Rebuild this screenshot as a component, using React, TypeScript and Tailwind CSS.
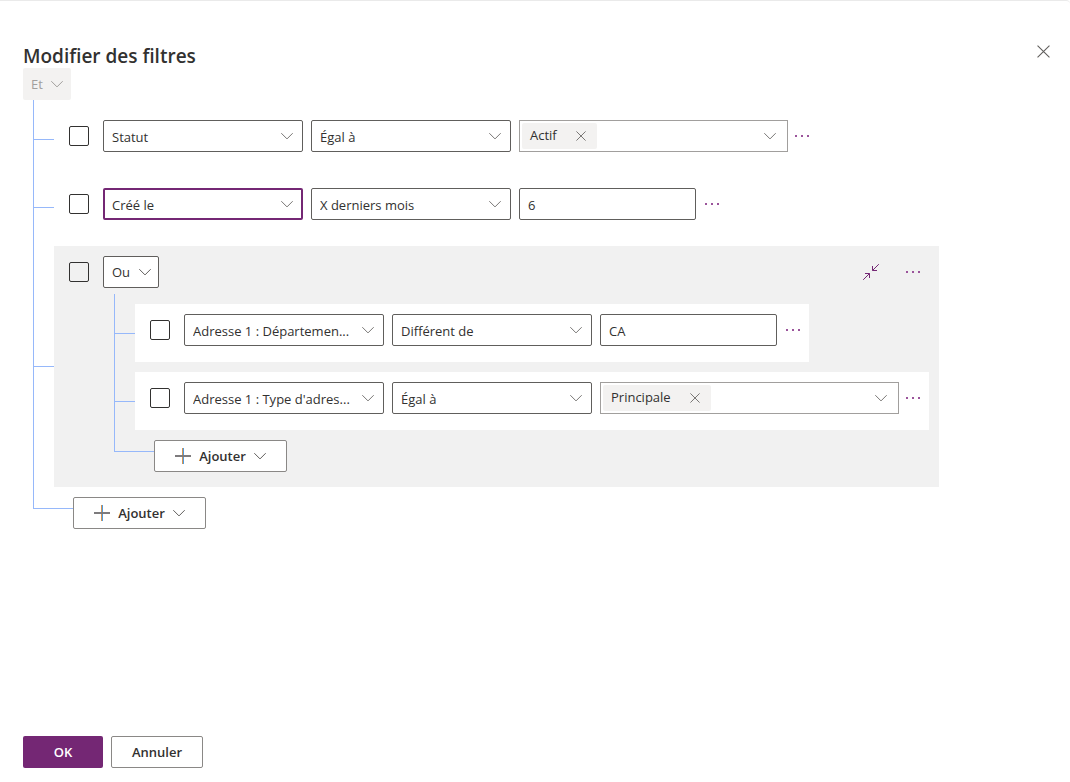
import { useState } from 'react';
import type { ReactNode } from 'react';

type Condition = {
  id: number;
  field: string;
  operator: string;
  value: string;
  kind: 'text' | 'tags';
  focused?: boolean;
  width?: string;
};

const rootConditions: Condition[] = [
  { id: 1, field: 'Statut', operator: 'Égal à', value: 'Actif', kind: 'tags', width: 'w-[269px]' },
  { id: 2, field: 'Créé le', operator: 'X derniers mois', value: '6', kind: 'text', focused: true },
];

const groupConditions: Condition[] = [
  { id: 3, field: 'Adresse 1 : Départemen...', operator: 'Différent de', value: 'CA', kind: 'text' },
  { id: 4, field: "Adresse 1 : Type d'adres...", operator: 'Égal à', value: 'Principale', kind: 'tags', width: 'w-[299px]' },
];

const Chevron = ({ className = '' }: { className?: string }) => (
  <svg className={`h-2 w-3 shrink-0 ${className}`} viewBox="0 0 12 8" fill="none" stroke="currentColor" strokeWidth="1">
    <path d="M0.3 1.2 6 6.9l5.7-5.7" />
  </svg>
);

const Cross = ({ className = '' }: { className?: string }) => (
  <svg className={className} viewBox="0 0 12 12" fill="none" stroke="currentColor" strokeWidth="1">
    <path d="M0.5 0.5l11 11M11.5 0.5l-11 11" />
  </svg>
);

const Checkbox = ({ label, className = 'bg-white' }: { label: string; className?: string }) => (
  <input
    type="checkbox"
    aria-label={label}
    className={`mr-3.5 size-5 shrink-0 appearance-none rounded-xs border border-[#323130] checked:bg-[#742774] ${className}`}
  />
);

const Dropdown = ({ label, value, focused }: { label: string; value: string; focused?: boolean }) => (
  <div className="relative mr-2 w-[200px] shrink-0">
    <select
      aria-label={label}
      className={`h-8 w-full appearance-none rounded-xs bg-white pt-1 pr-7 text-[#323130] outline-none ${
        focused ? 'border-2 border-[#742774] pl-[7px]' : 'border border-[#605e5c] pl-2'
      }`}
    >
      <option>{value}</option>
    </select>
    <Chevron className="pointer-events-none absolute top-3 right-[10px] text-[#797775]" />
  </div>
);

const OperatorSelect = ({ value, disabled }: { value: string; disabled?: boolean }) => (
  <div className={`relative ${disabled ? 'w-12' : 'w-14'}`}>
    <select
      aria-label="Opérateur du groupe"
      disabled={disabled}
      className={`h-8 w-full appearance-none rounded-xs pt-0.5 pl-2 outline-none ${
        disabled ? 'bg-[#f3f2f1] text-[#a19f9d] opacity-100' : 'border border-[#605e5c] bg-white text-[#323130]'
      }`}
    >
      <option>{value}</option>
    </select>
    <Chevron
      className={`pointer-events-none absolute top-3 right-2 ${disabled ? 'text-[#a19f9d]' : 'text-[#605e5c]'}`}
    />
  </div>
);

const TagPicker = ({ value, width }: { value: string; width?: string }) => {
  const [tag, setTag] = useState(value);
  return (
    <div className={`flex h-8 shrink-0 items-center border border-[#a19f9d] bg-white pl-0.5 ${width}`}>
      {tag && (
        <span className="flex h-[26px] items-center rounded-xs bg-[#f3f2f1] pl-2">
          {tag}
          <button aria-label={`Supprimer ${tag}`} className="ml-2 flex h-full w-8 items-center justify-center" onClick={() => setTag('')}>
            <Cross className="size-[10px] text-[#605e5c]" />
          </button>
        </span>
      )}
      <input aria-label="Valeur" className="h-full min-w-0 flex-1 outline-none" />
      <button aria-label="Ouvrir la liste" className="flex h-full w-[34px] items-center justify-center">
        <Chevron className="text-[#797775]" />
      </button>
    </div>
  );
};

const MoreButton = ({ className = 'w-8' }: { className?: string }) => (
  <button aria-label="Autres commandes" className={`flex h-8 shrink-0 items-center justify-center text-[#9b549b] ${className}`}>
    <svg className="h-0.5 w-[14px]" viewBox="0 0 14 2" fill="currentColor">
      <path d="M0 0h2v2H0zM6 0h2v2H6zM12 0h2v2h-2z" />
    </svg>
  </button>
);

const AddButton = () => (
  <button className="mt-[10px] flex h-8 w-[133px] items-center justify-center rounded-xs border border-[#8a8886] bg-white font-semibold text-[#323130]">
    <svg className="size-4" viewBox="0 0 16 16">
      <path d="M7 0h1v16H7z" fill="#d8944f" />
      <path d="M8 0h1v16H8z" fill="#4f9be0" />
      <path d="M0 7h16v2H0z" fill="#7d7b7d" />
    </svg>
    <span className="mx-2 pt-0.5">Ajouter</span>
    <Chevron className="text-[#605e5c]" />
  </button>
);

const ConditionRow = ({ condition }: { condition: Condition }) => (
  <div className="flex bg-white pt-[10px] pb-4 pl-[15px]">
    <div className="flex h-8 items-center">
      <Checkbox label={`Sélectionner ${condition.field}`} />
      <Dropdown label="Champ" value={condition.field} focused={condition.focused} />
      <Dropdown label="Opérateur" value={condition.operator} />
      {condition.kind === 'tags' ? (
        <>
          <TagPicker value={condition.value} width={condition.width} />
          <MoreButton className="mr-0.5 w-7" />
        </>
      ) : (
        <>
          <input
            aria-label="Valeur"
            defaultValue={condition.value}
            className="h-8 w-[177px] shrink-0 rounded-xs border border-[#605e5c] bg-white px-2 pt-0.5 outline-none"
          />
          <MoreButton />
        </>
      )}
    </div>
  </div>
);

// Child of the tree, with the short line that ties it to the trunk
const Branch = ({ children }: { children: ReactNode }) => (
  <div className="flex items-center">
    <div className="h-px w-5 shrink-0 bg-[#96b8fa]" />
    {children}
  </div>
);

const Tree = ({ children }: { children: ReactNode }) => (
  <div>
    <div className="flex flex-col gap-[10px] border-l border-[#96b8fa] pt-[10px]">{children}</div>
    <div className="flex">
      <div className="h-[22px] w-10 shrink-0 border-b border-l border-[#96b8fa]" />
      <AddButton />
    </div>
  </div>
);

const ConditionGroup = () => (
  <div className="bg-[#f1f1f1] pt-[10px] pr-[10px] pb-[15px]">
    <div className="mb-1.5 flex items-center pl-[15px]">
      <Checkbox label="Sélectionner le groupe" className="bg-transparent" />
      <OperatorSelect value="Ou" />
      <button aria-label="Réduire le groupe" className="mr-[10px] ml-auto flex size-8 items-center justify-center text-[#742774]">
        <svg className="size-4" viewBox="0 0 16 16" fill="none" stroke="currentColor">
          <path d="M15.8 0.2 9.5 6.5M9.5 2v4.5H14M0.2 15.8l6.3-6.3M2 9.5h4.5V14" />
        </svg>
      </button>
      <MoreButton />
    </div>
    <div className="ml-[60px]">
      <Tree>
        {groupConditions.map((c) => (
          <Branch key={c.id}>
            <ConditionRow condition={c} />
          </Branch>
        ))}
      </Tree>
    </div>
  </div>
);

export default function App() {
  return (
    <div className="flex min-h-screen flex-col rounded-tr-sm border-t border-[#eaeaea] bg-white px-[23px] pb-[14px] font-['Open_Sans','Noto_Sans',sans-serif] text-[13px] text-[#323130]">
      <header className="flex items-start justify-between pt-[34px]">
        <h1 className="mt-[9px] text-[19px] leading-6 font-semibold">Modifier des filtres</h1>
        <button aria-label="Fermer" className="-mr-3 flex size-8 items-center justify-center">
          <Cross className="size-[13px] text-[#605e5c]" />
        </button>
      </header>
      <main>
        <OperatorSelect value="Et" disabled />
        <div className="ml-[10px]">
          <Tree>
            {rootConditions.map((c) => (
              <Branch key={c.id}>
                <ConditionRow condition={c} />
              </Branch>
            ))}
            <Branch>
              <ConditionGroup />
            </Branch>
          </Tree>
        </div>
      </main>
      <footer className="mt-auto flex gap-2 font-semibold">
        <button className="h-8 w-20 rounded-xs bg-[#742774] pt-0.5 text-white">OK</button>
        <button className="h-8 w-[92px] rounded-xs border border-[#8a8886] bg-white pt-0.5">Annuler</button>
      </footer>
    </div>
  );
}
